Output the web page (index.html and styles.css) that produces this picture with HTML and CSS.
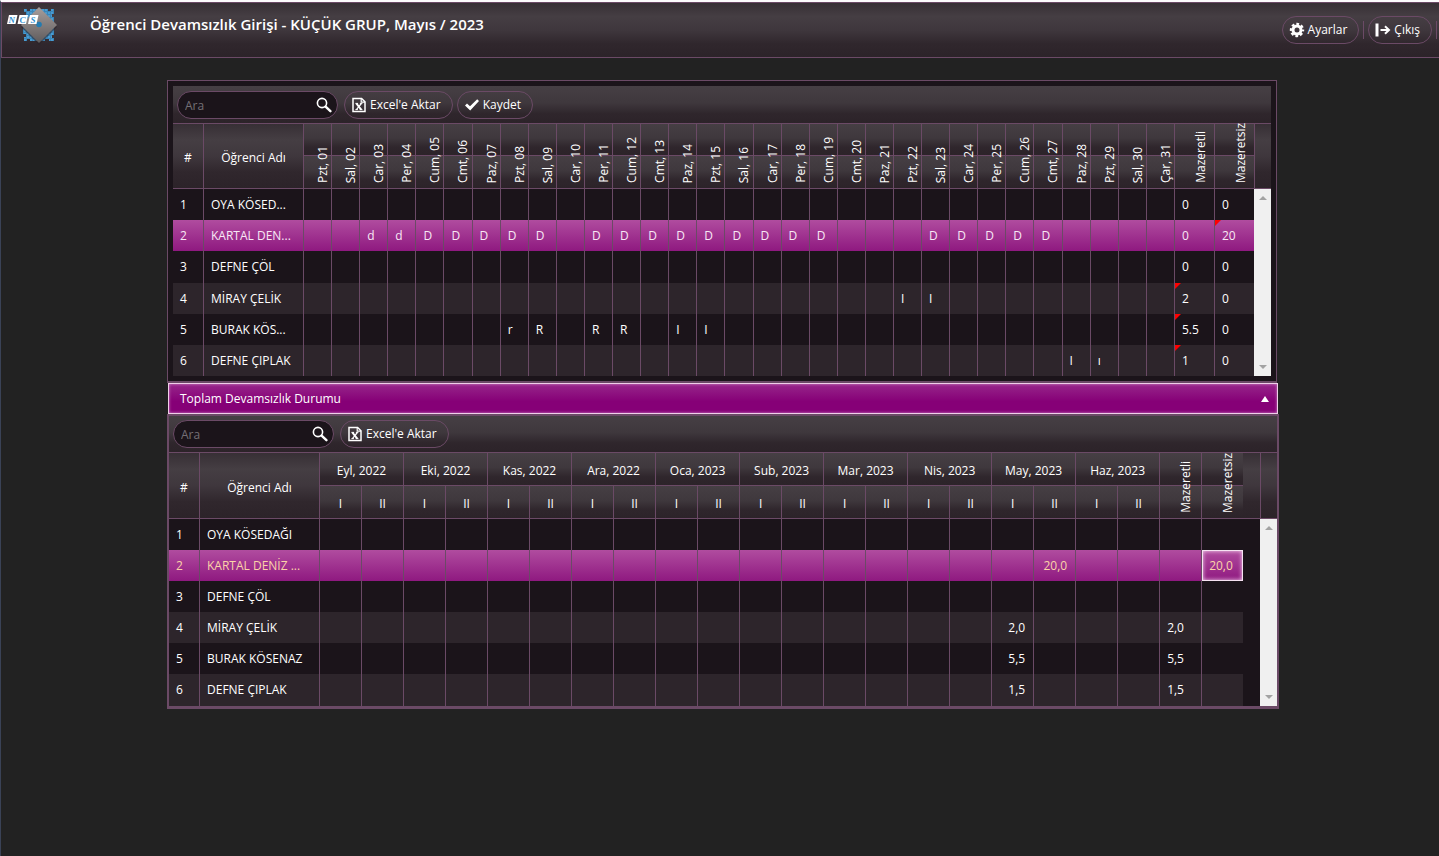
FILE: index.html
```html
<!DOCTYPE html>
<html lang="tr">
<head>
<meta charset="utf-8">
<title>Öğrenci Devamsızlık Girişi</title>
<link rel="stylesheet" href="styles.css">
</head>
<body>
<svg class="sprite" aria-hidden="true">
  <symbol id="i-search" viewBox="0 0 16 16"><circle cx="6" cy="6" r="4.6" fill="none" stroke="#fff" stroke-width="1.6"/><path d="M9.6 9.6 14.4 14.2" stroke="#fff" stroke-width="2.4" stroke-linecap="round"/></symbol>
  <symbol id="i-excel" viewBox="0 0 14 16"><path d="M1 1.5h8.6L13 4.8v9.7H1z" fill="none" stroke="#fff" stroke-width="1.5"/><path d="M9.2 1.5v3.7H13" fill="none" stroke="#fff" stroke-width="1.2"/><path d="M4.4 6.5 9.2 12.6" stroke="#fff" stroke-width="2"/><path d="M9.4 6.5 4.4 12.6" stroke="#fff" stroke-width="1.2"/><path d="M3.4 6.4h2.7M7.9 6.4h2.5M3.4 12.6h2.5M7.7 12.6h2.7" stroke="#fff"/></symbol>
  <symbol id="i-check" viewBox="0 0 16 14"><path d="M1 7.6 3 5.4 6 8.3 13.2 1.2 15 3 6.2 12.4z" fill="#fff"/></symbol>
  <symbol id="i-gear" viewBox="0 0 16 16"><g fill="none" stroke="#fff"><circle cx="8" cy="8" r="4" stroke-width="3"/><circle cx="8" cy="8" r="6" stroke-width="2.400" stroke-dasharray="2.700 2.012" stroke-dashoffset="1.350"/></g></symbol>
  <symbol id="i-exit" viewBox="0 0 16 14"><path d="M.5.500h3v13h-3z" fill="#fff"/><path d="M5.500 7h8" stroke="#fff" stroke-width="2"/><path d="M10 3.200 14 7l-4 3.800" fill="none" stroke="#fff" stroke-width="2"/></symbol>
</svg>

<header class="topbar">
  <svg class="logo" viewBox="0 0 56 40" role="img" aria-label="NCS">
    <defs>
      <pattern id="px" width="3" height="3" patternUnits="userSpaceOnUse"><rect width="3" height="3" fill="#3a85b8"/><rect width="2" height="2" fill="#4a9bd0"/></pattern>
      <linearGradient id="metal" x1="0" y1="0" x2="0" y2="1"><stop offset="0" stop-color="#a79e9c"/><stop offset="1" stop-color="#5f5b5c"/></linearGradient>
    </defs>
    <path fill="url(#px)" d="M18 3h3v2h3V3h18v2h3V3h3v5h-2v3h2v18h-2v3h2v3h-5v-2h-4v2H24v-2h-3v2h-3v-4h2v-3h-3V9h3V6h-2z"/>
    <path d="M33 3 51 21 33 39 15 21z" fill="#2a2329" opacity=".6"/>
    <path d="M33 1 51 19 33 37 15 19z" fill="url(#metal)"/>
    <circle cx="33" cy="18.500" r="2.800" fill="#237bb0"/><path d="M28 15l3 1.500" stroke="#463f45" stroke-width="1.500"/>
    <g fill="#fff"><path d="M3 9h8.500L9.500 18H1z"/><path d="M13.500 9H22L20 18h-8.500z"/><path d="M24 9h8.500l-2 9H22z"/></g>
    <g class="logo-text"><text x="2.500" y="16.500">N</text><text x="13.500" y="16.500">C</text><text x="24.500" y="16.500">S</text></g>
  </svg>
  <h1 class="title">Öğrenci Devamsızlık Girişi - KÜÇÜK GRUP, Mayıs / 2023</h1>
  <nav class="actions">
    <button class="btn" type="button"><svg class="icon"><use href="#i-gear"/></svg>Ayarlar</button>
    <span class="sep"></span>
    <button class="btn" type="button"><svg class="icon"><use href="#i-exit"/></svg>Çıkış</button>
    <span class="sep"></span>
  </nav>
</header>

<main class="content">
  <section class="panel">
    <div class="toolbar">
      <label class="search"><input type="search" placeholder="Ara" aria-label="Ara"><svg class="icon"><use href="#i-search"/></svg></label>
      <button class="btn" type="button"><svg class="icon"><use href="#i-excel"/></svg>Excel'e Aktar</button>
      <button class="btn" type="button"><svg class="icon"><use href="#i-check"/></svg>Kaydet</button>
    </div>
    <div class="grid">
      <table class="daily">
        <colgroup><col class="c-no"><col class="c-name"><col span="31"><col class="c-sum"><col class="c-last"></colgroup>
        <thead>
          <tr><th rowspan="2" class="tall">#<th rowspan="2" class="tall">Öğrenci Adı
            <th><th><th><th><th><th><th>
            <th><th><th><th><th><th><th>
            <th><th><th><th><th><th><th>
            <th><th><th><th><th><th><th>
            <th><th><th>
            <th><th></tr>
          <tr>
            <th><span>Pzt, 01</span><th><span>Sal, 02</span><th><span>Car, 03</span><th><span>Per, 04</span><th><span>Cum, 05</span><th><span>Cmt, 06</span><th><span>Paz, 07</span>
            <th><span>Pzt, 08</span><th><span>Sal, 09</span><th><span>Car, 10</span><th><span>Per, 11</span><th><span>Cum, 12</span><th><span>Cmt, 13</span><th><span>Paz, 14</span>
            <th><span>Pzt, 15</span><th><span>Sal, 16</span><th><span>Car, 17</span><th><span>Per, 18</span><th><span>Cum, 19</span><th><span>Cmt, 20</span><th><span>Paz, 21</span>
            <th><span>Pzt, 22</span><th><span>Sal, 23</span><th><span>Car, 24</span><th><span>Per, 25</span><th><span>Cum, 26</span><th><span>Cmt, 27</span><th><span>Paz, 28</span>
            <th><span>Pzt, 29</span><th><span>Sal, 30</span><th><span>Çar, 31</span>
            <th class="wide"><span>Mazeretli</span><th class="wide"><span>Mazeretsiz</span></tr>
        </thead>
        <tbody>
          <tr><td>1<td>OYA KÖSED...
            <td><td><td><td><td><td><td>
            <td><td><td><td><td><td><td>
            <td><td><td><td><td><td><td>
            <td><td><td><td><td><td><td>
            <td><td><td>
            <td>0<td>0</tr>
          <tr class="selected"><td>2<td>KARTAL DEN...
            <td><td><td>d<td>d<td>D<td>D<td>D
            <td>D<td>D<td><td>D<td>D<td>D<td>D
            <td>D<td>D<td>D<td>D<td>D<td><td>
            <td><td>D<td>D<td>D<td>D<td>D<td>
            <td><td><td>
            <td>0<td class="flag">20</tr>
          <tr class="extra"><td>3<td>DEFNE ÇÖL
            <td><td><td><td><td><td><td>
            <td><td><td><td><td><td><td>
            <td><td><td><td><td><td><td>
            <td><td><td><td><td><td><td>
            <td><td><td>
            <td>0<td>0</tr>
          <tr><td>4<td>MİRAY ÇELİK
            <td><td><td><td><td><td><td>
            <td><td><td><td><td><td><td>
            <td><td><td><td><td><td><td>
            <td>I<td>I<td><td><td><td><td>
            <td><td><td>
            <td class="flag">2<td>0</tr>
          <tr><td>5<td>BURAK KÖS...
            <td><td><td><td><td><td><td>
            <td>r<td>R<td><td>R<td>R<td><td>I
            <td>I<td><td><td><td><td><td>
            <td><td><td><td><td><td><td>
            <td><td><td>
            <td class="flag">5.5<td>0</tr>
          <tr><td>6<td>DEFNE ÇIPLAK
            <td><td><td><td><td><td><td>
            <td><td><td><td><td><td><td>
            <td><td><td><td><td><td><td>
            <td><td><td><td><td><td><td>I
            <td>ı<td><td>
            <td class="flag">1<td>0</tr>
        </tbody>
      </table>
      <div class="side"><div class="corner"></div><div class="scroll"></div></div>
    </div>
  </section>

  <button class="accordion" type="button" aria-expanded="true">Toplam Devamsızlık Durumu</button>

  <section class="panel summary">
    <div class="toolbar">
      <label class="search"><input type="search" placeholder="Ara" aria-label="Ara"><svg class="icon"><use href="#i-search"/></svg></label>
      <button class="btn" type="button"><svg class="icon"><use href="#i-excel"/></svg>Excel'e Aktar</button>
    </div>
    <div class="grid">
      <table class="monthly">
        <colgroup><col class="c-no"><col class="c-name"><col span="21" class="c-half"><col class="c-end"><col></colgroup>
        <thead>
          <tr><th rowspan="2" class="tall">#<th rowspan="2" class="tall">Öğrenci Adı<th colspan="2">Eyl, 2022<th colspan="2">Eki, 2022<th colspan="2">Kas, 2022<th colspan="2">Ara, 2022<th colspan="2">Oca, 2023<th colspan="2">Sub, 2023<th colspan="2">Mar, 2023<th colspan="2">Nis, 2023<th colspan="2">May, 2023<th colspan="2">Haz, 2023<th><th><th rowspan="2" class="tall"></tr>
          <tr><th>I<th>II<th>I<th>II<th>I<th>II<th>I<th>II<th>I<th>II<th>I<th>II<th>I<th>II<th>I<th>II<th>I<th>II<th>I<th>II<th class="wide"><span>Mazeretli</span><th class="wide"><span>Mazeretsiz</span></tr>
        </thead>
        <tbody>
          <tr><td>1<td>OYA KÖSEDAĞI<td><td><td><td><td><td><td><td><td><td><td><td><td><td><td><td><td><td><td><td><td><td><td></tr>
          <tr class="selected"><td>2<td>KARTAL DENİZ ...<td><td><td><td><td><td><td><td><td><td><td><td><td><td><td><td><td><td class="num">20,0<td><td><td><td class="focus">20,0<td></tr>
          <tr><td>3<td>DEFNE ÇÖL<td><td><td><td><td><td><td><td><td><td><td><td><td><td><td><td><td><td><td><td><td><td><td></tr>
          <tr><td>4<td>MİRAY ÇELİK<td><td><td><td><td><td><td><td><td><td><td><td><td><td><td><td><td class="num">2,0<td><td><td><td>2,0<td><td></tr>
          <tr><td>5<td>BURAK KÖSENAZ<td><td><td><td><td><td><td><td><td><td><td><td><td><td><td><td><td class="num">5,5<td><td><td><td>5,5<td><td></tr>
          <tr class="extra"><td>6<td>DEFNE ÇIPLAK<td><td><td><td><td><td><td><td><td><td><td><td><td><td><td><td><td class="num">1,5<td><td><td><td>1,5<td><td></tr>
        </tbody>
      </table>
      <div class="side"><div class="corner"></div><div class="scroll"></div></div>
    </div>
  </section>
</main>
</body>
</html>
```
FILE: styles.css
```css
:root {
  --line: #6b4a66;
  --dark: #1b141a;
  --alt: #2d252b;
  --bar: linear-gradient(#463f44, #3f383d 45%, #2f262c 75%, #2c2329);
  --deep: linear-gradient(#372f35, #453e43 25%, #3f373d 50%, #30272d 75%, #2c2329);
  --pick: linear-gradient(#b04c9f, #8f1980);
}

* { box-sizing: border-box; }

body {
  margin: 0;
  min-height: 100vh;
  border-top: 2px solid #fdfbfd;
  border-left: 1px solid #3a4256;
  background: #222;
  color: #fff;
  font: 12px/16px "Open Sans", "Noto Sans", sans-serif;
}

button, input { font: inherit; color: inherit; }
.sprite { position: absolute; width: 0; height: 0; }

.topbar {
  display: flex;
  align-items: flex-start;
  height: 56px;
  padding: 0 2px 0 4px;
  border: 1px solid var(--line);
  border-right: 0;
  background: var(--deep);
}
.logo { flex: none; width: 56px; height: 40px; margin-top: 3px; }
.logo-text { fill: #2f8fd0; font: italic bold 9px "Liberation Serif", serif; }
.title { flex: 1; margin: 9px 0 0 28px; font-size: 15px; line-height: 24px; font-weight: 600; }
.actions { display: flex; align-items: center; gap: 4px; margin-top: 13px; }
.sep { width: 1px; height: 18px; background: var(--line); }

.btn {
  display: flex;
  align-items: center;
  gap: 3px;
  height: 28px;
  padding: 0 11px 0 6px;
  border: 1px solid var(--line);
  border-radius: 14px;
  background: none;
  white-space: nowrap;
}
.icon { width: 16px; height: 16px; flex: none; }

.content { padding: 22px 160px 0 166px; }

.panel {
  margin-right: 2px;
  padding: 5px;
  border: 1px solid var(--line);
  border-bottom-width: 2px;
  background: var(--dark);
}
.summary { margin: 0; padding: 0; border-width: 2px 2px 3px; }

.toolbar {
  display: flex;
  align-items: center;
  gap: 4px;
  height: 38px;
  padding: 0 4px;
  border-bottom: 1px solid var(--line);
  background: var(--bar);
}
.summary .toolbar { height: 37px; }

.search {
  display: flex;
  align-items: center;
  width: 161px;
  height: 28px;
  margin-right: 2px;
  padding: 0 5px 0 7px;
  border: 1px solid var(--line);
  border-radius: 14px;
  background: var(--dark);
}
.search input { flex: 1; min-width: 0; padding: 2px 0 0; border: 0; outline: 0; background: none; }
.search input::placeholder { color: #757075; opacity: 1; }

.grid { display: flex; }
table { flex: 1; width: 0; table-layout: fixed; border-collapse: separate; border-spacing: 0; }
.c-no { width: 31px; }
.c-name { width: 100px; }
.c-sum { width: 40px; }
.c-last { width: 39px; }
.c-half { width: 42px; }
.c-end { width: 41px; }
.monthly .c-name { width: 120px; }

th {
  position: relative;
  height: 33px;
  padding: 4px 0 0;
  border: solid var(--line);
  border-width: 0 1px 1px 0;
  background: var(--bar);
  font-weight: 400;
}
.daily tr:first-child th { height: 32px; }
th.tall { background: var(--deep); }
th span {
  position: absolute;
  z-index: 1;
  left: 11px;
  bottom: 5px;
  max-height: 60px;
  overflow: hidden;
  writing-mode: vertical-rl;
  transform: rotate(180deg);
  white-space: nowrap;
}
th.wide span { left: 18px; }

td {
  position: relative;
  height: 31px;
  padding: 0 0 0 7px;
  border-right: 1px solid var(--line);
  background: var(--dark);
  white-space: nowrap;
}
.num { padding: 0 8px 0 0; text-align: right; }
tr:nth-child(even) td { background: var(--alt); }
.extra td { height: 32px; }
tr.selected td { background: var(--pick); color: #f8e8f5; }
.monthly .selected td { color: #fbd3a8; }
.daily tr > :last-child { border-right: 0; }
.monthly tr td:nth-child(n+24), .monthly th.tall:last-child { border-right: 0; }
.monthly thead tr:first-child th:nth-last-child(2), .monthly thead tr:last-child th:last-child { border-right: 0; }
.monthly tbody tr td:last-child { background: var(--dark); }

.flag::before {
  content: "";
  position: absolute;
  top: 0;
  left: 0;
  border-top: 6px solid #f00;
  border-right: 6px solid transparent;
}
.focus { box-shadow: inset 0 0 0 1px #f6e2f2, inset 0 0 4px 1px #f3d0ec; }

.side { display: flex; flex-direction: column; width: 17px; }
.corner { height: 65px; border: solid var(--line); border-width: 0 0 1px 1px; background: var(--deep); }
.summary .corner { height: 66px; }
.scroll {
  display: flex;
  flex: 1;
  flex-direction: column;
  justify-content: space-between;
  align-items: center;
  padding: 7px 0;
  background: #f0f0f0;
}
.scroll::before, .scroll::after { content: ""; border: 4px solid transparent; }
.scroll::before { border-top: 0; border-bottom-color: #a3a3a3; }
.scroll::after { border-bottom: 0; border-top-color: #a3a3a3; }

.accordion {
  display: flex;
  align-items: center;
  justify-content: space-between;
  width: calc(100% - 2px);
  height: 31px;
  margin: 0 1px;
  padding: 0 8px 0 11px;
  border: 1px solid #f0cfe9;
  background: linear-gradient(#97268a, #860077 60%, #860077);
  box-shadow: inset 0 0 3px #d08cc6;
}
.accordion::after { content: ""; border: solid transparent; border-width: 0 4px 6px; border-bottom-color: #fff; }
```
